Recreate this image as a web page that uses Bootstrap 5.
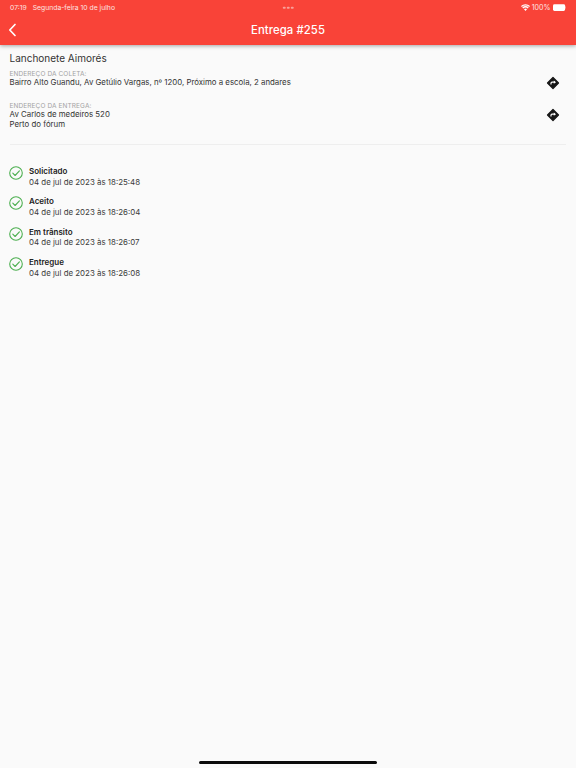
<!DOCTYPE html>
<html lang="pt-BR">

<head>
    <meta charset="UTF-8" />
    <meta name="viewport" content="width=device-width, initial-scale=1.0" />
    <title>Entrega #255</title>
    <link href="https://cdn.jsdelivr.net/npm/bootstrap@5.3.3/dist/css/bootstrap.min.css" rel="stylesheet">
    <style>
        html, body { height: 100%; }
        body { background: #fafafa; color: #333; font-family: Inter, "Liberation Sans", sans-serif; font-size: 8px; overflow: hidden; }
        .app-head { background: #f94338; color: #fff; height: 45px; box-shadow: 0 1px 4px rgba(0, 0, 0, .35); }
        .status-row { height: 15px; padding: 1px 10px 0; font-size: 6.8px; color: #fde3e1; }
        .status-date { margin-left: 6px; }
        .status-dots { gap: 1.5px; }
        .status-dots i { display: block; width: 2.5px; height: 2.5px; border-radius: 50%; background: #f9a09a; }
        .status-side { gap: 2px; }
        .status-pct { font-size: 7.1px; }
        .title-row { height: 30px; padding: 0 8px; }
        .page-title { font-size: 11.3px; font-weight: 500; letter-spacing: .1px; }
        .back-btn { width: 9px; height: 14px; display: block; }
        .content-wrap { padding: 7px 10px 0 9.5px; }
        .shop-name { font-size: 10px; line-height: 13px; margin: 0 0 4px; }
        .addr-block { min-height: 28px; margin-bottom: 4px; }
        .addr-label { font-size: 6.5px; line-height: 8px; padding-top: .5px; color: #a3a3a3; text-transform: uppercase; letter-spacing: .1px; }
        .addr-text { font-size: 7.85px; line-height: 10px; margin-top: -.5px; }
        .addr-text + .addr-text { margin-top: 0; }
        .addr-icon { width: 14px; height: 14px; margin-right: 6px; flex: none; }
        .split-line { border-top: 1px solid #eeeeee; margin: 15px 0 0; }
        .steps-wrap { margin-top: 22px; }
        .step-row { height: 30.4px; gap: 6px; }
        .step-check { width: 14px; height: 14px; flex: none; margin: -1px 0 0 -.5px; }
        .step-name { font-size: 8px; font-weight: 600; line-height: 9.500px; color: #222; }
        .step-time { font-size: 7.9px; line-height: 10px; color: #3c3c3c; }
        .home-bar { position: fixed; left: 199px; bottom: 4px; width: 178px; height: 3px; border-radius: 2px; background: #0b0b0b; }
    </style>
</head>

<body>

    <header class="app-head">
        <div class="status-row d-flex align-items-center justify-content-between position-relative">
            <div class="d-flex">
                <span>07:19</span>
                <span class="status-date">Segunda-feira 10 de julho</span>
            </div>
            <div class="status-dots d-flex position-absolute top-50 start-50 translate-middle">
                <i></i><i></i><i></i>
            </div>
            <div class="status-side d-flex align-items-center">
                <svg width="9" height="7" viewBox="0 0 18 14" fill="#fff">
                    <path d="M9 14 6 10.6a4.4 4.4 0 0 1 6 0zM4.4 8.9 2.6 7a9.4 9.4 0 0 1 12.8 0l-1.8 1.900a6.800 6.800 0 0 0-9.200 0zM1.700 6 0 4.100a13.200 13.200 0 0 1 18 0L16.300 6A10.700 10.700 0 0 0 1.700 6z" />
                </svg>
                <span class="status-pct">100%</span>
                <svg width="13.500" height="7" viewBox="0 0 14 7">
                    <rect x="0" y="0" width="12.500" height="7" rx="1.500" fill="#fff" />
                    <rect x="13" y="2.300" width="1" height="2.400" rx=".5" fill="#fde3e1" />
                </svg>
            </div>
        </div>
        <div class="title-row d-flex align-items-center position-relative">
            <svg class="back-btn" viewBox="0 0 9 14" fill="none" stroke="#fff" stroke-width="1.700" stroke-linecap="round" stroke-linejoin="round">
                <path d="M7 1.500 1.800 7 7 12.500" />
            </svg>
            <div class="page-title position-absolute top-50 start-50 translate-middle">Entrega #255</div>
        </div>
    </header>

    <main class="content-wrap">
        <h1 class="shop-name fw-normal">Lanchonete Aimorés</h1>

        <div class="addr-block d-flex align-items-center justify-content-between">
            <div class="align-self-start">
                <div class="addr-label">Endereço da coleta:</div>
                <div class="addr-text">Bairro Alto Guandu, Av Getúlio Vargas, nº 1200, Próximo a escola, 2 andares</div>
            </div>
            <svg class="addr-icon" viewBox="0 0 14 14">
                <path fill="#161616" d="M7 1.500 12.500 7 7 12.500 1.500 7z" stroke="#161616" stroke-width="1.200" stroke-linejoin="round" />
                <path fill="none" stroke="#fff" stroke-width="1.200" d="M5 8.600V7.200Q5 6.200 6 6.200H8.600" />
                <path fill="#fff" d="M7.800 4.600 10 6.200 7.800 7.800z" />
            </svg>
        </div>

        <div class="addr-block d-flex align-items-center justify-content-between">
            <div class="align-self-start">
                <div class="addr-label">Endereço da entrega:</div>
                <div class="addr-text">Av Carlos de medeiros 520</div>
                <div class="addr-text">Perto do fórum</div>
            </div>
            <svg class="addr-icon" viewBox="0 0 14 14">
                <path fill="#161616" d="M7 1.500 12.500 7 7 12.500 1.500 7z" stroke="#161616" stroke-width="1.200" stroke-linejoin="round" />
                <path fill="none" stroke="#fff" stroke-width="1.200" d="M5 8.600V7.200Q5 6.200 6 6.200H8.600" />
                <path fill="#fff" d="M7.800 4.600 10 6.200 7.800 7.800z" />
            </svg>
        </div>

        <div class="split-line"></div>

        <div class="steps-wrap" id="steps"></div>
    </main>

    <div class="home-bar"></div>

    <script>
        const steps = [
            ['Solicitado', '04 de jul de 2023 às 18:25:48'],
            ['Aceito', '04 de jul de 2023 às 18:26:04'],
            ['Em trânsito', '04 de jul de 2023 às 18:26:07'],
            ['Entregue', '04 de jul de 2023 às 18:26:08']
        ];

        document.getElementById('steps').innerHTML = steps.map(s => `
            <div class="step-row d-flex">
                <svg class="step-check" viewBox="0 0 14 14" fill="none" stroke="#4caf50" stroke-width="1.100" stroke-linecap="round" stroke-linejoin="round">
                    <circle cx="7" cy="7" r="6.300" />
                    <path d="M3.800 7.200 6.100 9.500 10.400 4.900" />
                </svg>
                <div>
                    <div class="step-name">${s[0]}</div>
                    <div class="step-time">${s[1]}</div>
                </div>
            </div>`).join('');
    </script>

    <script src="https://cdn.jsdelivr.net/npm/bootstrap@5.3.3/dist/js/bootstrap.bundle.min.js"></script>
</body>

</html>
